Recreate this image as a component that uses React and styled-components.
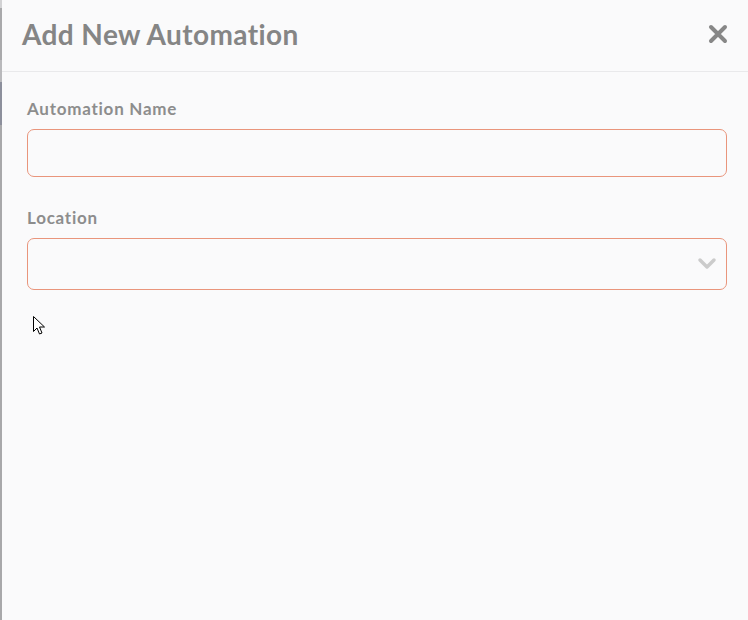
import React from "react";
import styled, { createGlobalStyle } from "styled-components";

const Global = createGlobalStyle`
  html, body { margin: 0; padding: 0; background: #fafafb; }
  body { font-family: Lato, "Noto Sans", sans-serif; }
  #root { height: 620px; }
`;

const Page = styled.div`
  display: flex;
  width: 748px;
  height: 620px;
  background: #fafafb;
  overflow: hidden;
`;

const Backdrop = styled.div`
  width: 2px;
  display: flex;
  flex-direction: column;
  flex-shrink: 0;
`;

const Strip = styled.div`
  height: ${(p) => p.h}px;
  flex: ${(p) => (p.grow ? 1 : "none")};
  background: ${(p) => p.c};
`;

const Modal = styled.div`
  flex: 1;
  display: flex;
  flex-direction: column;
  position: relative;
`;

const Header = styled.div`
  height: 71px;
  border-bottom: 1px solid #e9e9eb;
  display: flex;
  align-items: center;
  justify-content: space-between;
  padding: 0 20px 0 20px;
`;

const Title = styled.h1`
  margin: 0;
  margin-top: -3px;
  font-family: Lato, sans-serif;
  font-weight: 700;
  font-size: 28px;
  color: #858585;
  letter-spacing: 0.4px;
`;

const CloseButton = styled.button`
  border: none;
  background: none;
  padding: 0;
  width: 20px;
  height: 20px;
  margin-top: -4px;
  display: flex;
  cursor: pointer;
`;

const Body = styled.div`
  display: flex;
  flex-direction: column;
  padding: 27px 21px 0 25px;
`;

const Field = styled.div`
  display: flex;
  flex-direction: column;
  margin-bottom: ${(p) => p.mb || 0}px;
`;

const Label = styled.label`
  font-family: Lato, sans-serif;
  font-weight: 700;
  font-size: 17px;
  color: #8d8d8d;
  line-height: 20px;
  letter-spacing: 0.75px;
  margin-bottom: 10px;
`;

const Input = styled.input`
  box-sizing: border-box;
  height: ${(p) => p.h}px;
  width: 100%;
  border: 1px solid #e9957c;
  border-radius: 7px;
  background: #fafafb;
  outline: none;
  font-size: 16px;
  padding: 0 14px;
`;

const SelectBox = styled.div`
  box-sizing: border-box;
  height: 52px;
  border: 1px solid #e9957c;
  border-radius: 7px;
  display: flex;
  align-items: center;
  justify-content: flex-end;
  padding-right: 9px;
`;

const Cursor = styled.svg`
  position: absolute;
  left: 31px;
  top: 316px;
`;

export default function App() {
  return (
    <Page>
      <Global />
      <Backdrop>
        <Strip h={8} c="#d2d2d4" />
        <Strip h={52} c="#a9a9ab" />
        <Strip h={22} c="#b9b9bc" />
        <Strip h={43} c="#8c8f9c" />
        <Strip grow c="#a8a8aa" />
      </Backdrop>
      <Modal>
        <Header>
          <Title>Add New Automation</Title>
          <CloseButton aria-label="Close">
            <svg width="20" height="20" viewBox="0 0 20 20">
              <path d="M3 3 L17 17 M17 3 L3 17" stroke="#878787" strokeWidth="4" strokeLinecap="round" />
            </svg>
          </CloseButton>
        </Header>
        <Body>
          <Field mb={31}>
            <Label>Automation Name</Label>
            <Input h={48} />
          </Field>
          <Field>
            <Label>Location</Label>
            <SelectBox>
              <svg width="20" height="14" viewBox="0 0 20 14">
                <path d="M3 3 L10 10 L17 3" fill="none" stroke="#cbcbcb" strokeWidth="3.5" strokeLinecap="round" strokeLinejoin="round" />
              </svg>
            </SelectBox>
          </Field>
        </Body>
        <Cursor width="13" height="20" viewBox="0 0 13 20">
          <path d="M0.5 0.5 L0.5 15.5 L4 12 L6.5 18 L9 17 L6.5 11 L11.5 11 Z" fill="#fff" stroke="#000" strokeWidth="1" strokeLinejoin="miter" />
        </Cursor>
      </Modal>
    </Page>
  );
}
